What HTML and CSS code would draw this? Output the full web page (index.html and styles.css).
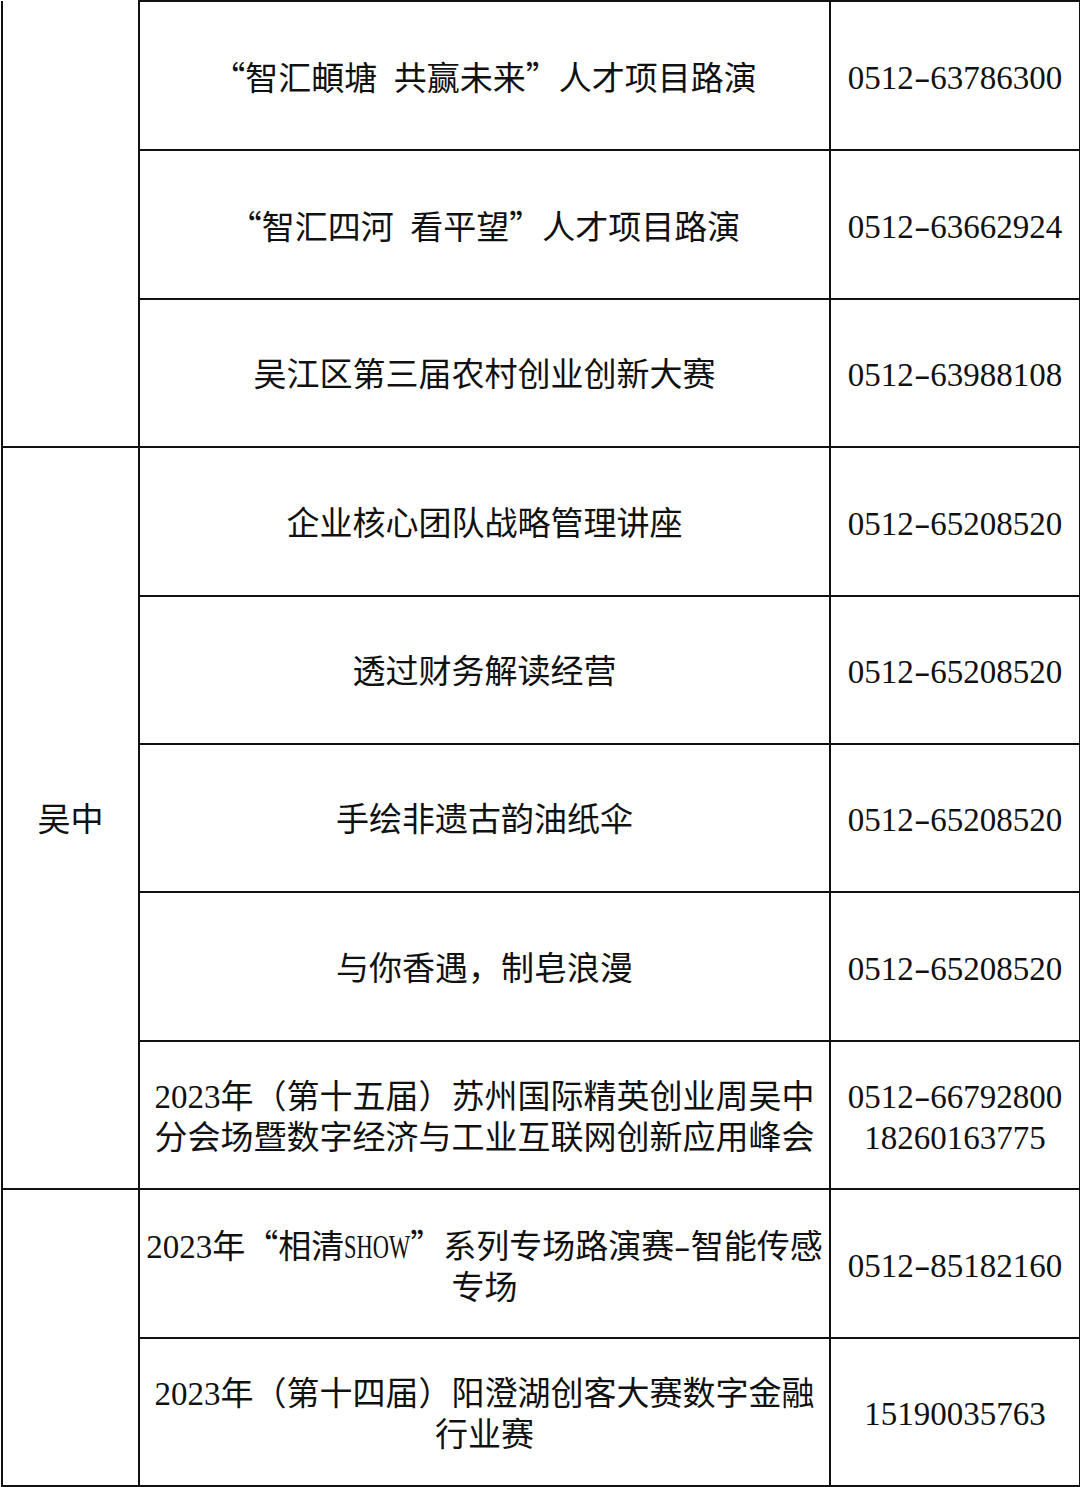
FILE: index.html
```html
<!DOCTYPE html>
<html lang="zh-CN">
<head>
<meta charset="utf-8">
<title>活动表</title>
<link rel="stylesheet" href="styles.css">
</head>
<body>
<table class="sheet">
  <colgroup>
    <col class="c-area">
    <col class="c-name">
    <col class="c-tel">
  </colgroup>
  <tbody>
    <tr class="r149">
      <td class="area area-open" rowspan="3"></td>
      <td class="name"><span class="q">“</span>智汇頔塘&ensp;共赢未来<span class="q">”</span>人才项目路演</td>
      <td class="tel">0512<span class="dash">-</span>63786300</td>
    </tr>
    <tr class="r149">
      <td class="name"><span class="q">“</span>智汇四河&ensp;看平望<span class="q">”</span>人才项目路演</td>
      <td class="tel">0512<span class="dash">-</span>63662924</td>
    </tr>
    <tr class="r148">
      <td class="name">吴江区第三届农村创业创新大赛</td>
      <td class="tel">0512<span class="dash">-</span>63988108</td>
    </tr>
    <tr class="r149">
      <td class="area" rowspan="5">吴中</td>
      <td class="name">企业核心团队战略管理讲座</td>
      <td class="tel">0512<span class="dash">-</span>65208520</td>
    </tr>
    <tr class="r148">
      <td class="name">透过财务解读经营</td>
      <td class="tel">0512<span class="dash">-</span>65208520</td>
    </tr>
    <tr class="r148">
      <td class="name">手绘非遗古韵油纸伞</td>
      <td class="tel">0512<span class="dash">-</span>65208520</td>
    </tr>
    <tr class="r149">
      <td class="name">与你香遇，制皂浪漫</td>
      <td class="tel">0512<span class="dash">-</span>65208520</td>
    </tr>
    <tr class="r148">
      <td class="name">2023年（第十五届）苏州国际精英创业周吴中<br>分会场暨数字经济与工业互联网创新应用峰会</td>
      <td class="tel">0512<span class="dash">-</span>66792800<br>18260163775</td>
    </tr>
    <tr class="r149">
      <td class="area" rowspan="2"></td>
      <td class="name">2023年<span class="q">“</span>相清<span class="narrow">SHOW</span><span class="q">”</span>系列专场路演赛<span class="dash">-</span>智能传感<br>专场</td>
      <td class="tel">0512<span class="dash">-</span>85182160</td>
    </tr>
    <tr class="r148">
      <td class="name">2023年（第十四届）阳澄湖创客大赛数字金融<br>行业赛</td>
      <td class="tel">15190035763</td>
    </tr>
  </tbody>
</table>
</body>
</html>
```

FILE: styles.css
```css
html, body {
  margin: 0;
  padding: 0;
  background: #ffffff;
}

body {
  width: 1080px;
  height: 1487px;
  overflow: hidden;
  font-family: "Liberation Serif", "Noto Sans CJK SC", serif;
  font-size: 33px;
  line-height: 41px;
  color: #111111;
}

.sheet {
  border-collapse: collapse;
  table-layout: fixed;
  width: 1078px;
  margin: 0 0 0 1px;
}

.c-area { width: 137px; }
.c-name { width: 691px; }
.c-tel { width: 250px; }

.sheet td {
  border: 2px solid #111111;
  padding: 5px 2px 0;
  text-align: center;
  vertical-align: middle;
  white-space: nowrap;
}

.sheet td.area-open {
  border-top: none;
}

.r149 { height: 149px; }
.r148 { height: 148px; }

.q {
  font-family: "Noto Sans CJK SC", sans-serif;
}

.dash {
  display: inline-block;
  width: 0.5em;
  text-align: center;
  transform: scaleX(1.5);
}

.narrow {
  display: inline-block;
  transform: scaleX(0.68);
  transform-origin: left center;
  margin-right: -31px;
}
```
